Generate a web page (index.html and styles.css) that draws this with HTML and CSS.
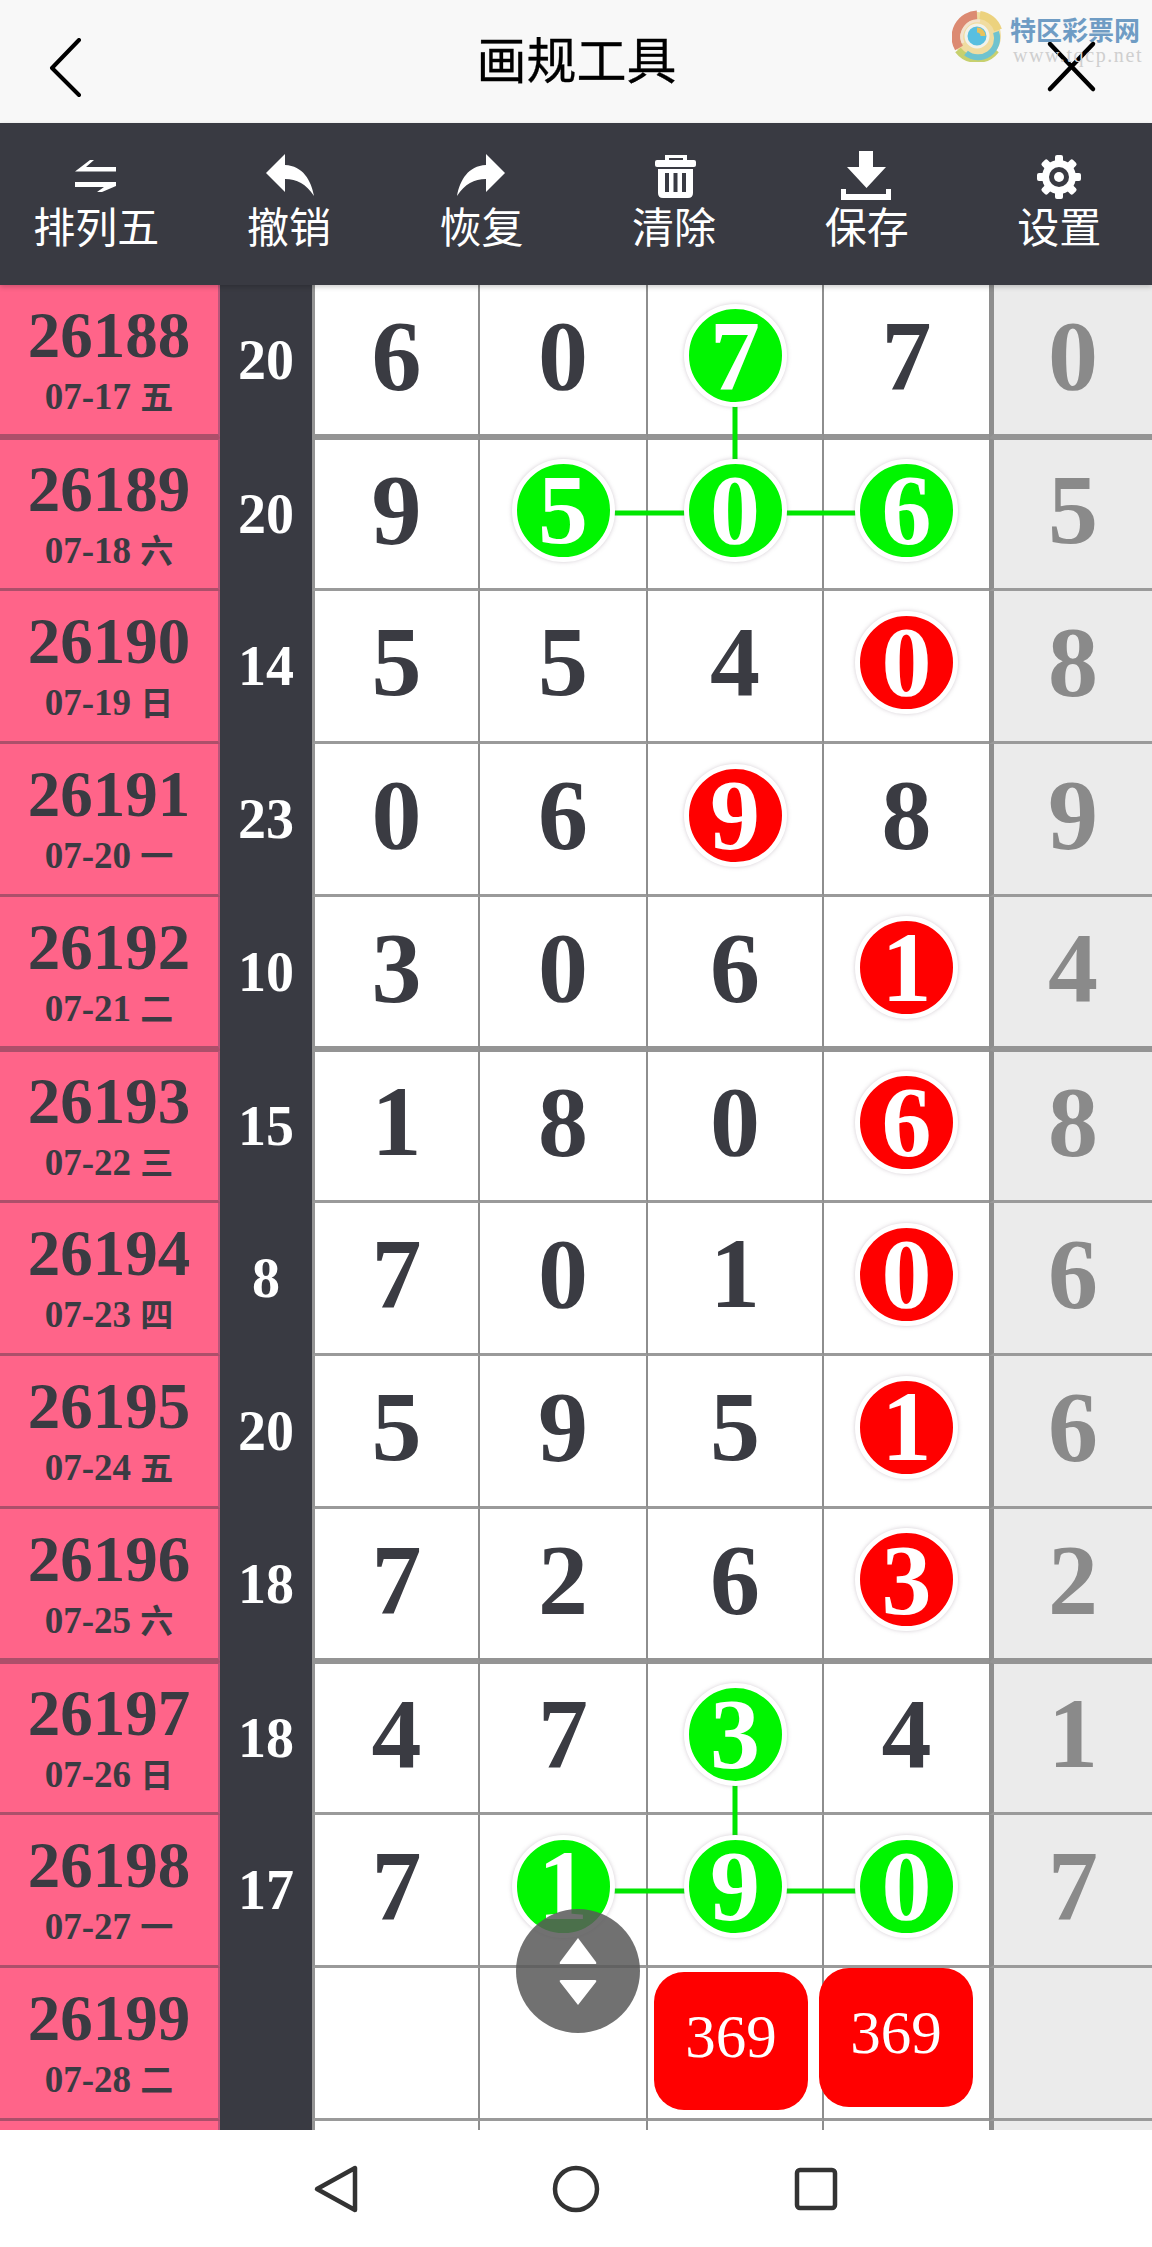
FILE: index.html
```html
<!DOCTYPE html>
<html lang="zh">

<head>
    <meta charset="UTF-8">
    <meta name="viewport" content="width=device-width, initial-scale=1.0">
    <title>画规工具</title>
    <link rel="stylesheet" href="styles.css">
</head>

<body>
    <div class="header">
        <svg class="back" viewBox="0 0 40 60"><path d="M32 2 L5 30 L32 57"/></svg>
        <div class="title">画规工具</div>
        <svg class="shut" viewBox="0 0 60 60"><path d="M4 6 L47 51 M47 6 L4 51"/></svg>

        <!-- watermark -->
        <div class="logo">
            <svg class="swirl" viewBox="0 0 50 52">
                <circle cx="25" cy="26" r="24" fill="#f0dca0" stroke="none"/>
                <path d="M28 5 A22 22 0 0 1 46 20" stroke="#ecd27e" stroke-width="8"/>
                <path d="M6 40 A24 24 0 0 0 44 40" stroke="#c7d06e" stroke-width="7"/>
                <path d="M14 43 A19 19 0 0 0 44 22" stroke="#6fc3cf" stroke-width="6"/>
                <path d="M25 5 A22 22 0 0 0 7 38" stroke="#dc8a72" stroke-width="9"/>
                <path d="M28 11 A16 16 0 0 0 11 33" stroke="#f3e3cf" stroke-width="3"/>
                <circle cx="25" cy="26" r="11" stroke="#f2f2ea" stroke-width="3" fill="#58bfe0"/>
                <path d="M25 20 A6 6 0 0 1 31 26" stroke="#e8c25c" stroke-width="5"/>
            </svg>
            <div class="logo-text">
                <div class="logo-name">特区彩票网</div>
                <div class="logo-url">www.tqcp.net</div>
            </div>
        </div>
    </div>

    <div class="toolbar">
        <div class="tool">
            <svg viewBox="0 0 60 60"><path d="M9 25.5 L24 14 H28 L20 21 H50 V25.5 Z M9 36 H50 V40 L36 46 H31 L38 41 H9 Z"/></svg>
            <span>排列五</span>
        </div>
        <div class="tool">
            <svg viewBox="0 0 60 60"><path d="M7 27 L26 8 V19 C44 20 52 34 55 50 C47 38 38 33 26 33 V46 Z"/></svg>
            <span>撤销</span>
        </div>
        <div class="tool">
            <svg viewBox="0 0 60 60"><path d="M54 27 L35 8 V19 C17 20 9 34 6 50 C14 38 23 33 35 33 V46 Z"/></svg>
            <span>恢复</span>
        </div>
        <div class="tool">
            <svg viewBox="0 0 60 60">
                <path d="M21 15 V9 H43 V15 H39 V12 H25 V15 Z"/>
                <rect x="11" y="14" width="41" height="7" rx="2"/>
                <path d="M14 23 H49 V47 Q49 52 44 52 H19 Q14 52 14 47 Z M21 27 V46 H25 V27 Z M29.5 27 V46 H33.5 V27 Z M38 27 V46 H42 V27 Z" fill-rule="evenodd"/>
            </svg>
            <span>清除</span>
        </div>
        <div class="tool">
            <svg viewBox="0 0 60 60"><path d="M22 5 H36 V21 H49 L29.5 42 L10 21 H22 Z M4 43 H9 V48 H49 V43 H54 V54 H4 Z"/></svg>
            <span>保存</span>
        </div>
        <div class="tool">
            <svg viewBox="0 0 60 60">
                <circle cx="30" cy="31" r="17"/>
                <rect x="26" y="9" width="8" height="44" rx="2"/>
                <rect x="26" y="9" width="8" height="44" rx="2" transform="rotate(45 30 31)"/>
                <rect x="26" y="9" width="8" height="44" rx="2" transform="rotate(90 30 31)"/>
                <rect x="26" y="9" width="8" height="44" rx="2" transform="rotate(135 30 31)"/>
                <circle cx="30" cy="31" r="10" class="gear-hole"/>
                <circle cx="30" cy="31" r="5"/>
            </svg>
            <span>设置</span>
        </div>
    </div>

    <div class="board">
        <div class="row thick">
            <div class="issue"><b>26188</b><em>07-17 <i>五</i></em></div>
            <div class="sum">20</div>
            <div class="num">6</div>
            <div class="num">0</div>
            <div class="num"><span class="ball green">7</span></div>
            <div class="num">7</div>
            <div class="end">0</div>
        </div>
        <div class="row">
            <div class="issue"><b>26189</b><em>07-18 <i>六</i></em></div>
            <div class="sum">20</div>
            <div class="num">9</div>
            <div class="num"><span class="ball green">5</span></div>
            <div class="num"><span class="ball green">0</span></div>
            <div class="num"><span class="ball green">6</span></div>
            <div class="end">5</div>
        </div>
        <div class="row">
            <div class="issue"><b>26190</b><em>07-19 <i>日</i></em></div>
            <div class="sum">14</div>
            <div class="num">5</div>
            <div class="num">5</div>
            <div class="num">4</div>
            <div class="num"><span class="ball red">0</span></div>
            <div class="end">8</div>
        </div>
        <div class="row">
            <div class="issue"><b>26191</b><em>07-20 <i>一</i></em></div>
            <div class="sum">23</div>
            <div class="num">0</div>
            <div class="num">6</div>
            <div class="num"><span class="ball red">9</span></div>
            <div class="num">8</div>
            <div class="end">9</div>
        </div>
        <div class="row thick">
            <div class="issue"><b>26192</b><em>07-21 <i>二</i></em></div>
            <div class="sum">10</div>
            <div class="num">3</div>
            <div class="num">0</div>
            <div class="num">6</div>
            <div class="num"><span class="ball red">1</span></div>
            <div class="end">4</div>
        </div>
        <div class="row">
            <div class="issue"><b>26193</b><em>07-22 <i>三</i></em></div>
            <div class="sum">15</div>
            <div class="num">1</div>
            <div class="num">8</div>
            <div class="num">0</div>
            <div class="num"><span class="ball red">6</span></div>
            <div class="end">8</div>
        </div>
        <div class="row">
            <div class="issue"><b>26194</b><em>07-23 <i>四</i></em></div>
            <div class="sum">8</div>
            <div class="num">7</div>
            <div class="num">0</div>
            <div class="num">1</div>
            <div class="num"><span class="ball red">0</span></div>
            <div class="end">6</div>
        </div>
        <div class="row">
            <div class="issue"><b>26195</b><em>07-24 <i>五</i></em></div>
            <div class="sum">20</div>
            <div class="num">5</div>
            <div class="num">9</div>
            <div class="num">5</div>
            <div class="num"><span class="ball red">1</span></div>
            <div class="end">6</div>
        </div>
        <div class="row thick">
            <div class="issue"><b>26196</b><em>07-25 <i>六</i></em></div>
            <div class="sum">18</div>
            <div class="num">7</div>
            <div class="num">2</div>
            <div class="num">6</div>
            <div class="num"><span class="ball red">3</span></div>
            <div class="end">2</div>
        </div>
        <div class="row">
            <div class="issue"><b>26197</b><em>07-26 <i>日</i></em></div>
            <div class="sum">18</div>
            <div class="num">4</div>
            <div class="num">7</div>
            <div class="num"><span class="ball green">3</span></div>
            <div class="num">4</div>
            <div class="end">1</div>
        </div>
        <div class="row">
            <div class="issue"><b>26198</b><em>07-27 <i>一</i></em></div>
            <div class="sum">17</div>
            <div class="num">7</div>
            <div class="num"><span class="ball green">1</span></div>
            <div class="num"><span class="ball green">9</span></div>
            <div class="num"><span class="ball green">0</span></div>
            <div class="end">7</div>
        </div>
        <div class="row">
            <div class="issue"><b>26199</b><em>07-28 <i>二</i></em></div>
            <div class="sum"></div>
            <div class="num"></div>
            <div class="num"></div>
            <div class="num"></div>
            <div class="num"></div>
            <div class="end"></div>
        </div>
        <div class="row">
            <div class="issue"></div>
            <div class="sum"></div>
            <div class="num"></div>
            <div class="num"></div>
            <div class="num"></div>
            <div class="num"></div>
            <div class="end"></div>
        </div>

        <!-- lines drawn between the balls -->
        <svg class="links" viewBox="0 0 1152 1845">
            <path d="M735 72 V225 M563 228 H907 M735 1451 V1603 M563 1606 H907"/>
        </svg>

        <div class="tag tag-a">369</div>
        <div class="tag tag-b">369</div>

        <div class="mover">
            <svg viewBox="0 0 40 70">
                <path d="M20 2 L38 26 Q39 28 37 28 H3 Q1 28 2 26 Z M3 44 H37 Q39 44 38 46 L20 69 L2 46 Q1 44 3 44 Z"/>
            </svg>
        </div>
    </div>

    <div class="navbar">
        <div class="nav-item">
            <svg viewBox="0 0 50 50"><path d="M6 25 L44 4 V46 Z"/></svg>
        </div>
        <div class="nav-item">
            <svg viewBox="0 0 50 50"><circle cx="25" cy="25" r="21"/></svg>
        </div>
        <div class="nav-item">
            <svg viewBox="0 0 50 50"><rect x="6" y="6" width="38" height="38" rx="3"/></svg>
        </div>
    </div>
</body>

</html>
```

FILE: styles.css
```css
body {
    margin: 0;
    padding: 0;
    background-color: #fff;
    font-family: "Liberation Serif", "Noto Sans CJK SC", serif;
}

/* Header */
.header {
    position: relative;
    display: grid;
    grid-template-columns: 1fr auto 1fr;
    align-items: center;
    height: 123px;
    padding: 0 46px 0 47px;
    background-color: #f8f8f8;
}

.back {
    width: 40px;
    height: 60px;
    margin-top: 12px;
    fill: none;
    stroke: #000;
    stroke-width: 4;
    stroke-linecap: round;
    stroke-linejoin: round;
}

.shut {
    justify-self: end;
    width: 60px;
    height: 60px;
    margin-top: 12px;
    fill: none;
    stroke: #000;
    stroke-width: 4.5;
    stroke-linecap: round;
}

.title {
    margin-bottom: 9px;
    font-family: "Noto Sans CJK SC", sans-serif;
    font-size: 50px;
    line-height: 60px;
    color: #000;
    -webkit-text-stroke: 0.3px #000;
}

/* Watermark */
.logo {
    position: absolute;
    top: 10px;
    left: 952px;
    display: flex;
    gap: 8px;
}

.swirl {
    width: 50px;
    height: 52px;
    fill: none;
}

.logo-text {
    padding-top: 3px;
}

.logo-name {
    font-family: "Noto Sans CJK SC", sans-serif;
    font-size: 26px;
    font-weight: bold;
    line-height: 32px;
    color: #6f9cc4;
}

.logo-url {
    padding-left: 3px;
    font-size: 20px;
    line-height: 20px;
    letter-spacing: 1.6px;
    color: #cfcfcf;
}

/* Toolbar */
.toolbar {
    position: relative;
    z-index: 3;
    display: flex;
    height: 162px;
    overflow: hidden;
    background-color: #393a42;
    box-shadow: 0 2px 5px rgba(0, 0, 0, 0.2);
}

.tool {
    flex: 0 0 192.6px;
    display: flex;
    flex-direction: column;
    align-items: center;
    padding-top: 23px;
    font-family: "Noto Sans CJK SC", sans-serif;
    font-size: 42px;
    line-height: 38px;
    color: #fff;
}

.tool svg {
    width: 60px;
    height: 60px;
    fill: #fff;
}

.tool .gear-hole {
    fill: #393a42;
}

/* Board */
.board {
    position: relative;
    height: 1845px;
    overflow: hidden;
}

.row {
    display: grid;
    grid-template-columns: 220px 92px 168px 168px 176px 165px 163px;
    height: 153px;
}

.row > div {
    box-sizing: border-box;
    display: flex;
    align-items: center;
    justify-content: center;
    border-bottom: 3px solid #9a9a9a;
}

.row.thick > div {
    border-bottom-width: 4px;
    border-bottom-color: #949494;
}

.row.thick + .row > div {
    border-top: 2px solid #949494;
}

.row > .issue,
.row.thick > .issue,
.row.thick + .row > .issue {
    flex-direction: column;
    padding-top: 3px;
    background-color: #ff6489;
    border-right: 2px solid #b9567a;
    border-bottom-color: #ad4f6a;
    border-top-color: #ad4f6a;
    color: #3a3b42;
}

.issue b {
    font-size: 65px;
    line-height: 60px;
}

.issue em {
    margin-top: 9px;
    font-size: 37px;
    font-style: normal;
    font-weight: bold;
    line-height: 42px;
}

.issue i {
    font-family: "Noto Sans CJK SC", sans-serif;
    font-size: 33px;
    font-style: normal;
}

.row > .sum,
.row.thick > .sum,
.row.thick + .row > .sum {
    background-color: #393a42;
    border-color: #393a42;
    font-size: 56px;
    font-weight: bold;
    color: #fff;
}

.row > .num,
.row > .end {
    padding-bottom: 8px;
    font-size: 100px;
    font-weight: bold;
    line-height: 100px;
    color: #3a3b42;
}

.row > .num {
    border-right: 2px solid #8e8e8e;
}

.row > .sum + .num {
    border-left: 3px solid #949494;
}

.row > .num:nth-child(6) {
    border-right: none;
}

.row > .end {
    background-color: #ebebeb;
    border-left: 5px solid #8e8e8e;
    color: #8a8a8a;
}

.ball {
    position: relative;
    z-index: 2;
    display: flex;
    align-items: center;
    justify-content: center;
    width: 93px;
    height: 93px;
    border-radius: 50%;
    border: 5px solid #fff;
    box-shadow: 0 0 4px rgba(120, 100, 120, 0.35);
    color: #fff;
}

.green {
    background-color: #00f500;
}

.red {
    background-color: #f00;
}

.links {
    position: absolute;
    top: 0;
    left: 0;
    z-index: 1;
    width: 1152px;
    height: 1845px;
    fill: none;
    stroke: #00e600;
    stroke-width: 5;
}

.tag {
    position: absolute;
    z-index: 3;
    box-sizing: border-box;
    display: flex;
    align-items: center;
    justify-content: center;
    width: 154px;
    padding-bottom: 9px;
    border-radius: 30px;
    background-color: #f00;
    font-size: 61px;
    color: #fff;
}

.tag-a {
    top: 1687px;
    left: 654px;
    height: 138px;
}

.tag-b {
    top: 1683px;
    left: 819px;
    height: 139px;
}

.mover {
    position: absolute;
    top: 1624px;
    left: 516px;
    z-index: 4;
    display: flex;
    align-items: center;
    justify-content: center;
    width: 124px;
    height: 124px;
    border-radius: 50%;
    background-color: rgba(88, 88, 88, 0.85);
}

.mover svg {
    width: 40px;
    height: 70px;
    fill: #fff;
}

/* Android nav */
.navbar {
    display: flex;
    justify-content: center;
    align-items: center;
    height: 117px;
    background-color: #fff;
}

.nav-item {
    display: flex;
    justify-content: center;
    width: 240px;
}

.nav-item svg {
    width: 50px;
    height: 50px;
    fill: none;
    stroke: #333;
    stroke-width: 4.5;
    stroke-linejoin: round;
}
```
